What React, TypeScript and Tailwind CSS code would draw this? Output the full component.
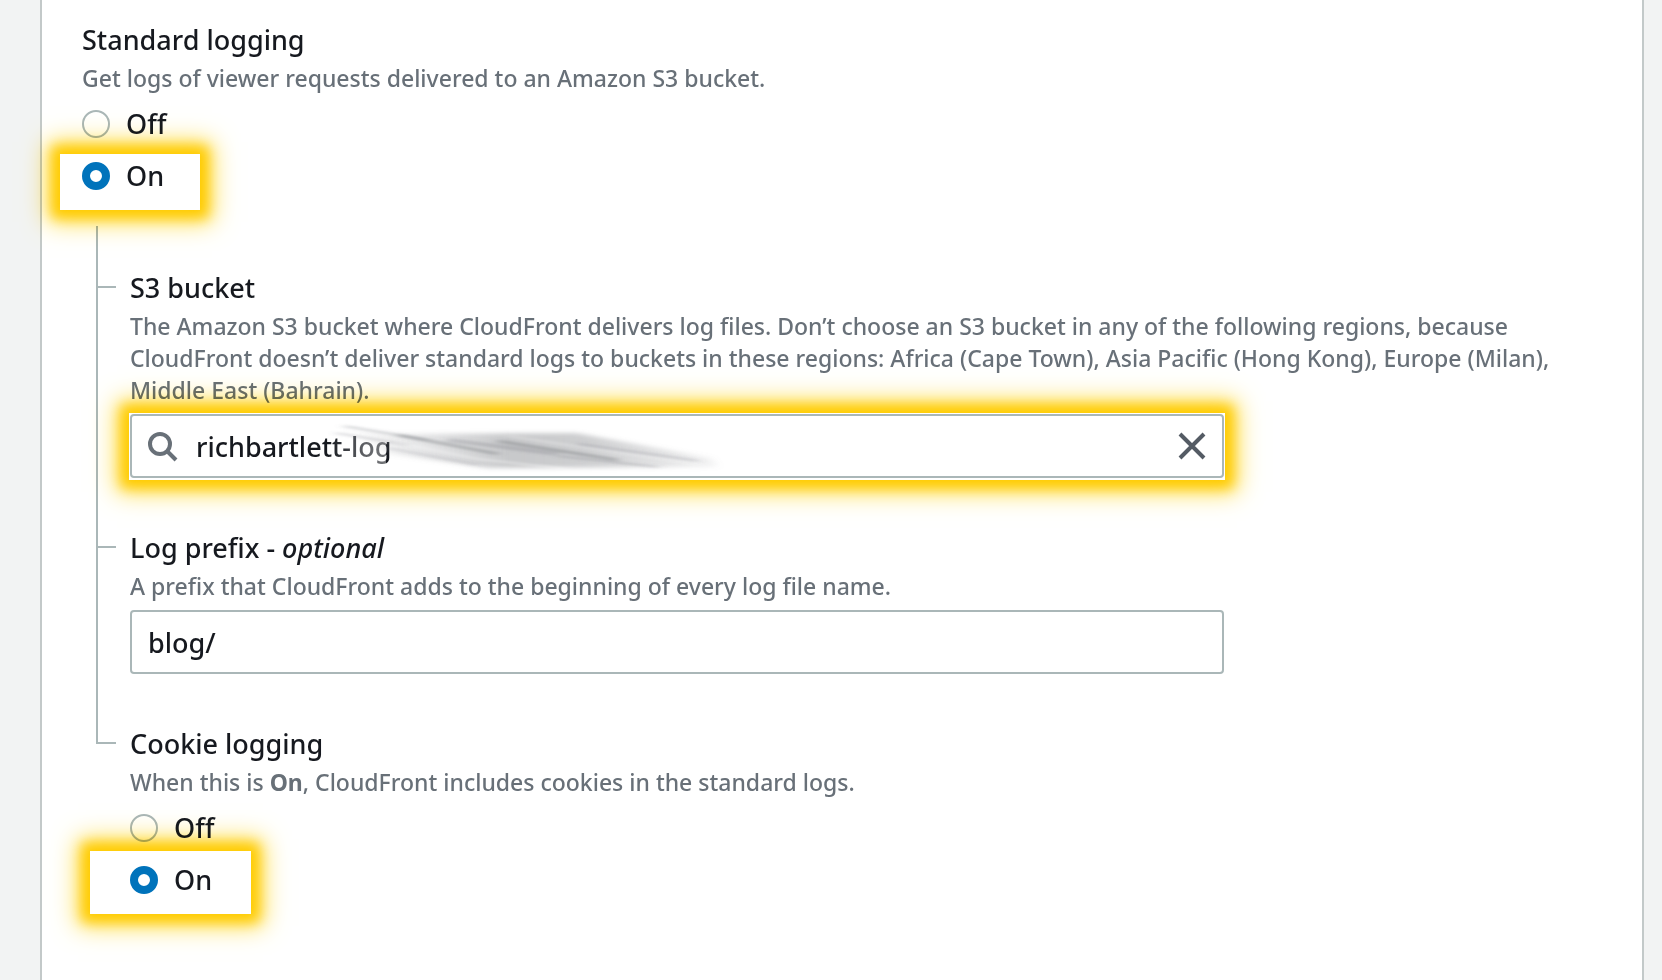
import { useState } from "react";
import type { ReactNode } from "react";

function Highlight({ className }: { className: string }) {
  return (
    <span
      aria-hidden="true"
      className={`pointer-events-none absolute mix-blend-multiply shadow-[0_0_12px_8px_#ffcc00,0_0_24px_12px_#ffdd4d] ${className}`}
    />
  );
}

type RadioProps = {
  name: string;
  label: string;
  checked: boolean;
  onSelect: () => void;
  children?: ReactNode;
};

function Radio({ name, label, checked, onSelect, children }: RadioProps) {
  return (
    <label className="relative flex h-11 w-fit items-center gap-4 text-[27px] leading-[44px]">
      {children}
      <input
        type="radio"
        name={name}
        checked={checked}
        onChange={onSelect}
        className="size-7 shrink-0 appearance-none rounded-full border-2 border-[#aab7b8] bg-white checked:border-8 checked:border-[#0073bb]"
      />
      {label}
    </label>
  );
}

function Branch({ first, last, children }: { first?: boolean; last?: boolean; children: ReactNode }) {
  return (
    <div className="flex">
      <div className="flex w-[34px] shrink-0 flex-col" aria-hidden="true">
        <div className={`w-5 border-b-2 border-l-2 border-[#aab7b8] ${first ? "h-[62px]" : "h-[70px]"}`} />
        {!last && <div className="flex-1 border-l-2 border-[#aab7b8]" />}
      </div>
      <div className={`min-w-0 flex-1 ${first ? "pt-10" : "pt-12"}`}>{children}</div>
    </div>
  );
}

const titleClass = "block text-[27px] leading-[44px] font-medium";
const hintClass = "text-[23px] leading-8 font-medium text-[#687078]";

function Smudge() {
  return (
    <svg
      aria-hidden="true"
      viewBox="0 0 400 60"
      className="pointer-events-none absolute left-[196px] top-0 h-[60px] w-[400px]"
    >
      <defs>
        <linearGradient id="veil" x1="0" x2="1" y1="0" y2="0">
          <stop offset="0" stopColor="#fff" stopOpacity="0" />
          <stop offset="0.6" stopColor="#fff" stopOpacity="0.3" />
          <stop offset="1" stopColor="#fff" stopOpacity="0.4" />
        </linearGradient>
        <linearGradient id="grey" x1="0" x2="1" y1="0" y2="0">
          <stop offset="0" stopColor="#8a8c90" stopOpacity="0" />
          <stop offset="0.25" stopColor="#8a8c90" stopOpacity="0.26" />
          <stop offset="0.45" stopColor="#8a8c90" stopOpacity="0.48" />
          <stop offset="0.65" stopColor="#8a8c90" stopOpacity="0.42" />
          <stop offset="0.85" stopColor="#8a8c90" stopOpacity="0.24" />
          <stop offset="1" stopColor="#8a8c90" stopOpacity="0.08" />
        </linearGradient>
        <filter id="soft" x="-10%" y="-20%" width="120%" height="140%">
          <feGaussianBlur stdDeviation="4 2" />
        </filter>
        <filter id="fine" x="-10%" y="-50%" width="120%" height="200%">
          <feGaussianBlur stdDeviation="5 1" />
        </filter>
      </defs>
      <rect x="0" y="10" width="58" height="46" fill="url(#veil)" />
      <path d="M14 12 L70 18 L248 17 L384 42 L390 51 L160 52 L62 38 Z" fill="url(#grey)" filter="url(#soft)" />
      <g stroke="#6d7076" fill="none" filter="url(#fine)">
        <path d="M16 10 L100 24" strokeWidth="2" opacity="0.3" />
        <path d="M70 19 L170 38" strokeWidth="3" opacity="0.4" />
        <path d="M8 17 L80 29" strokeWidth="2" opacity="0.25" />
        <path d="M60 32 L150 49" strokeWidth="2" opacity="0.2" />
        <path d="M120 24 L230 38" strokeWidth="4" opacity="0.25" />
        <path d="M170 25 L290 44" strokeWidth="3" opacity="0.4" />
        <path d="M250 28 L370 45" strokeWidth="3" opacity="0.2" />
        <path d="M230 40 L330 51" strokeWidth="2" opacity="0.25" />
      </g>
      <g stroke="#fff" fill="none" filter="url(#fine)">
        <path d="M66 26 L150 43 L240 53" strokeWidth="2" opacity="0.4" />
        <path d="M180 20 L280 35 L370 48" strokeWidth="2" opacity="0.3" />
      </g>
    </svg>
  );
}

export default function App() {
  const [logging, setLogging] = useState("on");
  const [cookies, setCookies] = useState("on");
  const [bucket, setBucket] = useState("richbartlett-log");
  const [prefix, setPrefix] = useState("blog/");

  return (
    <div className="min-h-screen bg-[#f2f3f3] pl-10 pr-[18px] font-['Noto_Sans',sans-serif] text-[#16191f]">
      <main className="min-h-screen border-x-2 border-[#c3c9c9] bg-white px-10 pb-16 pt-[18px] font-medium">
        <section>
          <h2 className={titleClass}>Standard logging</h2>
          <p className={hintClass}>Get logs of viewer requests delivered to an Amazon S3 bucket.</p>
          <div className="flex flex-col gap-2 pt-2" role="radiogroup" aria-label="Standard logging">
            <Radio name="logging" label="Off" checked={logging === "off"} onSelect={() => setLogging("off")} />
            <Radio name="logging" label="On" checked={logging === "on"} onSelect={() => setLogging("on")}>
              <Highlight className="-bottom-3 -left-[22px] top-0 w-[140px]" />
            </Radio>
          </div>
        </section>

        <div className="pl-[14px] pt-7">
          <Branch first>
            <label htmlFor="bucket" className={titleClass}>
              S3 bucket
            </label>
            <p className={hintClass}>
              The Amazon S3 bucket where CloudFront delivers log files. Don’t choose an S3 bucket in any of the
              following regions, because CloudFront doesn’t deliver standard logs to buckets in these regions: Africa
              (Cape Town), Asia Pacific (Hong Kong), Europe (Milan), Middle East (Bahrain).
            </p>
            <div className="relative mt-2 flex h-16 w-full max-w-[1094px] items-center rounded-[4px] border-2 border-[#aab7b8] bg-white pl-4 pr-4">
              <Highlight className="-inset-x-[3px] -bottom-1 -top-[3px]" />
              <svg aria-hidden="true" viewBox="0 0 32 32" className="size-8 shrink-0" fill="none" stroke="#687078" strokeWidth="4">
                <circle cx="12" cy="14" r="10" />
                <path d="M19 21 L28 30" />
              </svg>
              <input
                id="bucket"
                value={bucket}
                onChange={(e) => setBucket(e.target.value)}
                className="h-full min-w-0 flex-1 bg-transparent pl-4 text-[27px] outline-none"
              />
              <Smudge />
              <button type="button" aria-label="Clear" onClick={() => setBucket("")} className="shrink-0">
                <svg viewBox="0 0 28 28" className="size-7" fill="none" stroke="#545b64" strokeWidth="4">
                  <path d="M2 2 L26 26 M26 2 L2 26" />
                </svg>
              </button>
            </div>
          </Branch>

          <Branch>
            <label htmlFor="prefix" className={titleClass}>
              Log prefix - <i>optional</i>
            </label>
            <p className={hintClass}>A prefix that CloudFront adds to the beginning of every log file name.</p>
            <input
              id="prefix"
              value={prefix}
              onChange={(e) => setPrefix(e.target.value)}
              className="mt-2 block h-16 w-full max-w-[1094px] rounded-[4px] border-2 border-[#aab7b8] bg-white px-4 text-[27px] outline-none"
            />
          </Branch>

          <Branch last>
            <h3 className={titleClass}>Cookie logging</h3>
            <p className={hintClass}>
              When this is <b>On</b>, CloudFront includes cookies in the standard logs.
            </p>
            <div className="flex flex-col gap-2 pt-2" role="radiogroup" aria-label="Cookie logging">
              <Radio name="cookies" label="Off" checked={cookies === "off"} onSelect={() => setCookies("off")} />
              <Radio name="cookies" label="On" checked={cookies === "on"} onSelect={() => setCookies("on")}>
                <Highlight className="-bottom-3 -left-10 -top-[7px] w-[161px]" />
              </Radio>
            </div>
          </Branch>
        </div>
      </main>
    </div>
  );
}
